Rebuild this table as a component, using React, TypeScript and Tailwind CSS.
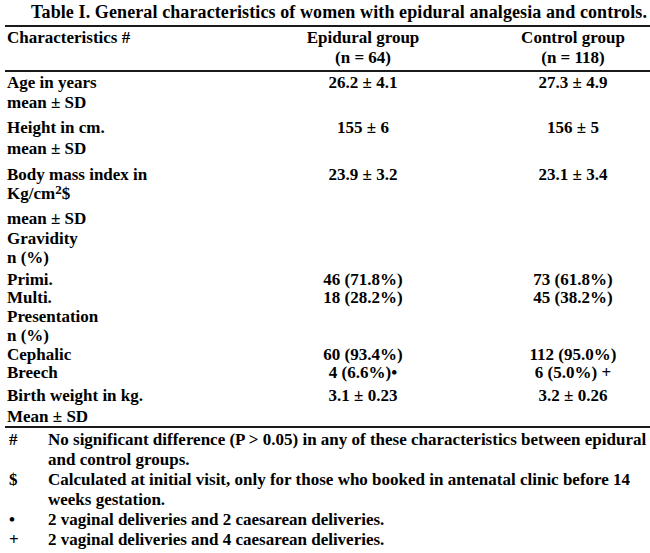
import React from "react";

type Row = { label: React.ReactNode; a?: string; b?: string; h: number };

const rows: Row[] = [
  { label: "Age in years", a: "26.2 ± 4.1", b: "27.3 ± 4.9", h: 20 },
  { label: "mean ± SD", h: 25 },
  { label: "Height in cm.", a: "155 ± 6", b: "156 ± 5", h: 21 },
  { label: "mean ± SD", h: 26 },
  { label: "Body mass index in", a: "23.9 ± 3.2", b: "23.1 ± 3.4", h: 19 },
  {
    label: (
      <>
        Kg/cm<sup className="-top-[5px] text-[13px]">2</sup>$
      </>
    ),
    h: 25,
  },
  { label: "mean ± SD", h: 20 },
  { label: "Gravidity", h: 19 },
  { label: "n (%)", h: 22 },
  { label: "Primi.", a: "46 (71.8%)", b: "73 (61.8%)", h: 18 },
  { label: "Multi.", a: "18 (28.2%)", b: "45 (38.2%)", h: 19 },
  { label: "Presentation", h: 19 },
  { label: "n (%)", h: 19 },
  { label: "Cephalic", a: "60 (93.4%)", b: "112 (95.0%)", h: 18 },
  { label: "Breech", a: "4 (6.6%)•", b: "6 (5.0%) +", h: 23 },
  { label: "Birth weight in kg.", a: "3.1 ± 0.23", b: "3.2 ± 0.26", h: 21 },
  { label: "Mean ± SD", h: 19 },
];

const notes: { mark: string; lines: string[] }[] = [
  { mark: "#", lines: ["No significant difference (P > 0.05) in any of these characteristics between epidural", "and control groups."] },
  { mark: "$", lines: ["Calculated at initial visit, only for those who booked in antenatal clinic before 14", "weeks gestation."] },
  { mark: "•", lines: ["2 vaginal deliveries and 2 caesarean deliveries."] },
  { mark: "+", lines: ["2 vaginal deliveries and 4 caesarean deliveries."] },
];

export default function App() {
  return (
    <div className="h-[553px] w-[650px] overflow-hidden bg-white font-['Liberation_Serif',serif] font-bold text-black">
      <div className="h-[25px] whitespace-nowrap pr-[3px] pt-[1px] text-right text-[18px] tracking-[0.1px] leading-[22px]">
        Table I. General characteristics of women with epidural analgesia and controls.
      </div>
      <div className="ml-[5px] h-[2px] bg-[#1a1a1a]" />

      {/* header */}
      <div className="flex h-[43px] pt-[1px] text-[17px] leading-[20px]">
        <div className="w-[290px] pl-[7px]">Characteristics #</div>
        <div className="w-[146px] text-center">
          Epidural group
          <br />
          (n = 64)
        </div>
        <div className="ml-[64px] w-[146px] text-center">
          Control group
          <br />
          (n = 118)
        </div>
      </div>
      <div className="ml-[5px] h-[2px] bg-[#1a1a1a]" />

      <div className="pt-[1px] text-[17px] leading-[20px]">
        {rows.map((r, i) => (
          <div key={i} className="flex whitespace-nowrap" style={{ height: r.h }}>
            <div className="w-[290px] pl-[7px]">{r.label}</div>
            <div className="w-[146px] text-center">{r.a}</div>
            <div className="ml-[64px] w-[146px] text-center">{r.b}</div>
          </div>
        ))}
      </div>
      <div className="ml-[5px] h-[2px] bg-[#1a1a1a]" />

      <div className="pt-[2px] text-[17px] leading-[20px]">
        {notes.map((n) => (
          <div key={n.mark} className="flex whitespace-nowrap">
            <div className="w-[48px] pl-[9px]">{n.mark}</div>
            <div>
              {n.lines.map((l) => (
                <div key={l}>{l}</div>
              ))}
            </div>
          </div>
        ))}
      </div>
    </div>
  );
}
